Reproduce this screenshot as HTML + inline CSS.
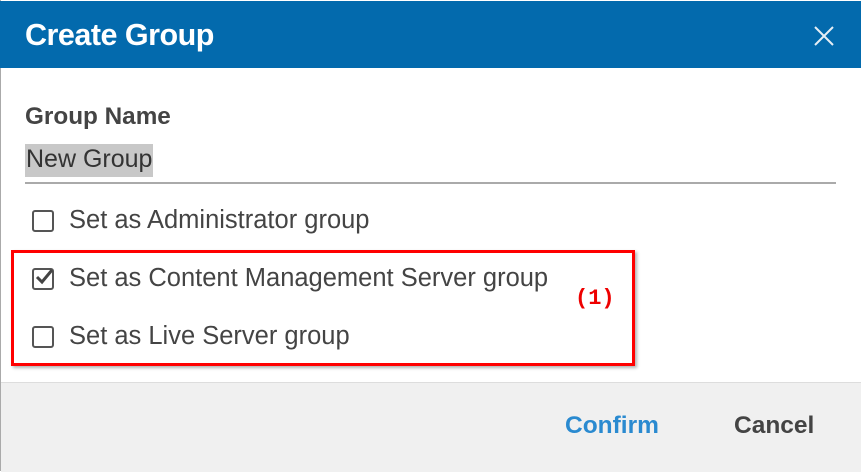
<!DOCTYPE html>
<html><head><style>
body{margin:0;width:861px;height:471px;background:#fff;font-family:"Liberation Sans",sans-serif;position:relative;overflow:hidden}
.hdr{position:absolute;left:0;top:1px;width:861px;height:67px;background:#036aad}
.title{position:absolute;left:25px;top:17px;color:#fff;font-weight:bold;font-size:30.5px;letter-spacing:-0.5px}
.x{position:absolute;left:814px;top:25px}
.lb{position:absolute;left:0;top:0;width:1px;height:471px;background:#aaa}
.t{position:absolute;color:#444;font-size:25.5px;white-space:nowrap}
.cb{position:absolute;width:22px;height:22px;border:2px solid #555;border-radius:3px;box-sizing:border-box}
.red{position:absolute;left:11px;top:250px;width:624px;height:116px;border:3px solid #f00;box-sizing:border-box;box-shadow:2px 2px 3px rgba(0,0,0,.3)}
.foot{position:absolute;left:1px;top:382px;width:860px;height:89px;background:#f0f0f0;border-top:1px solid #ddd}
</style></head><body>
<div class="lb"></div>
<div class="hdr"><div class="title">Create Group</div>
<svg class="x" width="20" height="20" viewBox="0 0 20 20"><path d="M1 1L19 19M19 1L1 19" stroke="#e6eef5" stroke-width="2"/></svg></div>
<div class="t" style="left:25px;top:103px;font-weight:bold;color:#444;font-size:24.3px">Group Name</div>
<div class="t" style="left:25px;top:144px;background:#c8c8c8;padding:1px 1px 3px 1px;color:#333;font-size:25px">New Group</div>
<div style="position:absolute;left:25px;top:182px;width:811px;height:2px;background:#aaa"></div>
<div class="cb" style="left:32px;top:210px"></div>
<div class="t" style="left:69px;top:206px">Set as Administrator group</div>
<div class="cb" style="left:32px;top:268px"></div>
<svg style="position:absolute;left:33px;top:267px" width="22" height="20" viewBox="0 0 22 20"><path d="M4 10L9 15L19 3" stroke="#444" stroke-width="3" fill="none"/></svg>
<div class="t" style="left:69px;top:264px">Set as Content Management Server group</div>
<div class="cb" style="left:32px;top:326px"></div>
<div class="t" style="left:69px;top:322px">Set as Live Server group</div>
<div class="red"></div>
<div style="position:absolute;left:575px;top:286px;color:#e00;font-family:'Liberation Mono',monospace;font-weight:bold;font-size:22px">(1)</div>
<div class="foot"></div>
<div class="t" style="left:565px;top:412px;color:#2a8ad0;font-weight:bold;font-size:24.5px">Confirm</div>
<div class="t" style="left:734px;top:412px;color:#444;font-weight:bold;font-size:24.5px">Cancel</div>
</body></html>
